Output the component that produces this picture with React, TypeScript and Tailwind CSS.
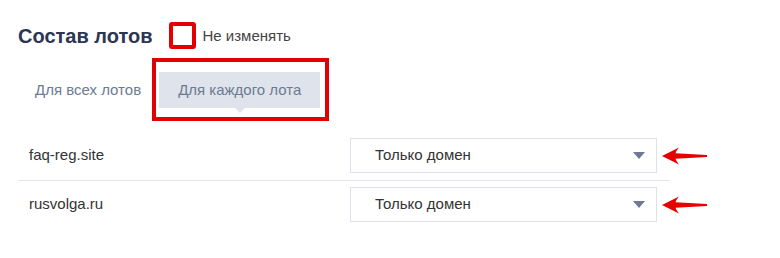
import { useState } from "react";

const LOTS = [
  { id: "1", domain: "faq-reg.site", mode: "Только домен" },
  { id: "2", domain: "rusvolga.ru", mode: "Только домен" },
];

function RedArrow() {
  return (
    <svg width="46" height="18" viewBox="0 0 46 18" className="block">
      <path
        d="M0 9 L17 0.5 Q14 4 13.5 6.2 L45 8 L45 10 L13.5 11.8 Q14 14 17 17.5 Z"
        fill="#e60000"
      />
    </svg>
  );
}

export default function App() {
  const [keep, setKeep] = useState(false);
  const [tab, setTab] = useState<"all" | "each">("each");

  return (
    <div className="h-[258px] w-[780px] bg-white font-['Liberation_Sans',Arial,sans-serif]">
      <div className="pl-[18px] pt-[22px]">
        <div className="flex items-center">
          <h2 className="text-[20px] font-bold leading-none text-[#2c3652]">
            Состав лотов
          </h2>
          <label className="ml-[16px] flex cursor-pointer items-center">
            <button
              type="button"
              onClick={() => setKeep(!keep)}
              className="h-[27px] w-[27px] rounded-[3px] border-4 border-[#e30000] bg-white"
            />
            <span className="ml-[7px] text-[15px] leading-none text-[#444]">
              Не изменять
            </span>
          </label>
        </div>

        <div className="mt-[23px] flex">
          <button
            type="button"
            onClick={() => setTab("all")}
            className="-ml-px h-9 px-[18px] text-[15px] text-[#6c7b93]"
          >
            Для всех лотов
          </button>
          <div className="relative">
            <button
              type="button"
              onClick={() => setTab("each")}
              className="relative h-9 bg-[#dfe3eb] px-[19px] text-[15px] text-[#6c7b93]"
            >
              Для каждого лота
              <span className="absolute left-1/2 top-full -ml-[5px] h-0 w-0 border-x-[5px] border-t-[5px] border-x-transparent border-t-[#dfe3eb]" />
            </button>
            {tab === "each" && (
              <div className="pointer-events-none absolute -bottom-[13px] -left-[7px] -right-[9px] -top-[14px] border-4 border-[#e30000]" />
            )}
          </div>
        </div>

        <div className="mt-[23px] w-[652px]">
          {LOTS.map((lot, i) => (
            <div
              key={lot.id}
              className={
                i === 0
                  ? "relative flex items-center border-b border-[#e2e5ec] py-[7px] pl-[11px] pr-[13px]"
                  : "relative flex items-center py-[6px] pl-[11px] pr-[13px]"
              }
            >
              <span className="text-[15px] text-[#333]">{lot.domain}</span>
              <div className="ml-auto flex h-[35px] w-[307px] items-center border border-[#dde1ea] bg-white pl-[24px] pr-[11px]">
                <span className="text-[15px] text-[#333]">{lot.mode}</span>
                <span className="ml-auto h-0 w-0 border-x-[6px] border-t-[7px] border-x-transparent border-t-[#6c7b93]" />
              </div>
              <div className="absolute left-[644px] top-1/2 -translate-y-1/2">
                <RedArrow />
              </div>
            </div>
          ))}
        </div>
      </div>
    </div>
  );
}
